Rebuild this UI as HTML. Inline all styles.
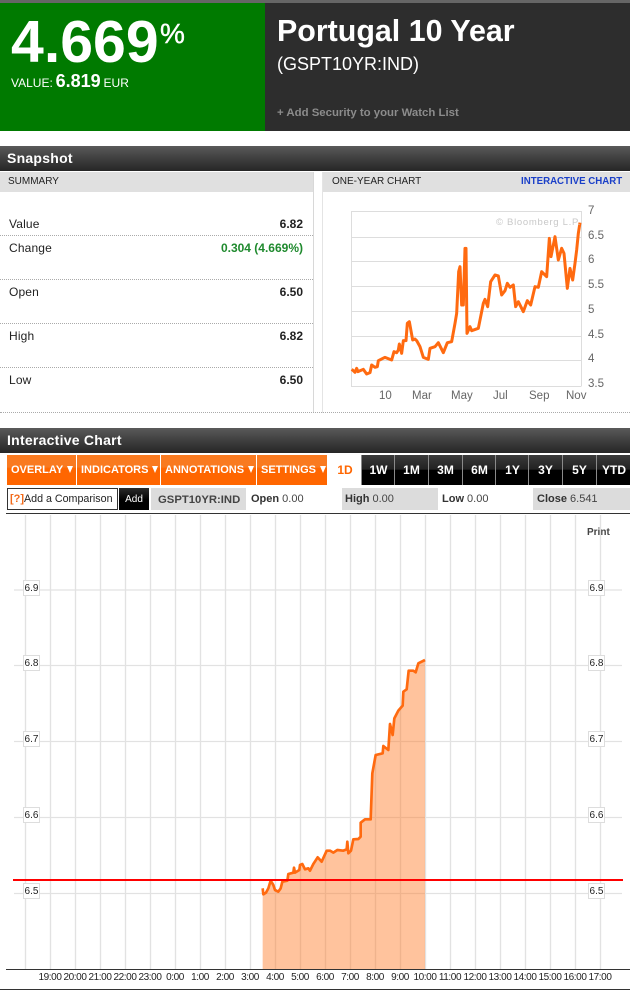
<!DOCTYPE html>
<html><head><meta charset="utf-8"><style>
html,body{margin:0;padding:0;background:#fff}
#p{position:relative;width:630px;height:991px;overflow:hidden;font-family:"Liberation Sans",Arial,sans-serif;background:#fff}
#p div{position:absolute;white-space:nowrap}
.bar{left:0;width:630px;height:25px;background:linear-gradient(#5a5a5a,#444 40%,#262626);color:#fff;font-weight:bold;font-size:14px;line-height:25px;letter-spacing:.25px;text-indent:7px}
.hd{height:20px;top:172px;background:#e0e0e0;font-size:10px;line-height:20px;color:#222}
.dot{left:0;width:313px;border-top:1px dotted #aaa;height:0}
.l{left:9px;font-size:12px;letter-spacing:.15px;color:#222;line-height:14px}
.r{right:327px;font-size:12px;font-weight:bold;color:#222;line-height:14px}
.o{top:455px;height:30px;background:linear-gradient(#f97a20,#f97a20 40%,#ff6600 45%,#ff6600);color:#fff;font-weight:bold;font-size:11px;line-height:30px;text-align:left;padding-left:4px;box-sizing:border-box}
.o i{display:inline-block;width:0;height:0;border-left:3.5px solid transparent;border-right:3.5px solid transparent;border-top:7px solid #fff;margin-left:4px;position:relative;top:0}
.k{top:455px;height:30px;background:linear-gradient(#3a3a3a,#222 48%,#000 50%,#000);color:#fff;font-weight:bold;font-size:12px;line-height:30px;text-align:center;border-left:1px solid #8a8a8a}
.g{background:#dcdcdc;top:488px;height:22px}
.t{top:493px;font-size:11px;line-height:13px;color:#444}
.t b{color:#333}
.tm{top:971px;width:30px;text-align:center;font-size:10px;line-height:13px;color:#222;letter-spacing:-.4px}
.yb{width:15px;height:14px;background:#fff;border:1px solid #ddd;font-size:10px;line-height:15px;text-align:center;color:#222}
</style></head><body><div id="p">
<div style="left:0;top:0;width:630px;height:3px;background:#666"></div>
<div style="left:0;top:3px;width:265px;height:128px;background:#007a00"></div>
<div style="left:265px;top:3px;width:365px;height:128px;background:#2d2d2d"></div>
<div style="left:11px;top:8px;font-size:59px;line-height:68px;font-weight:bold;color:#fff">4.669</div>
<div style="left:160px;top:17px;font-size:28px;line-height:34px;color:#fff;-webkit-text-stroke:.4px #fff">%</div>
<div style="left:11px;top:71px;font-size:12px;line-height:20px;color:#fff">VALUE: <b style="font-size:18px;margin:0 -.5px">6.819</b> EUR</div>
<div style="left:277px;top:13px;font-size:30.4px;line-height:36px;font-weight:bold;color:#fff">Portugal 10 Year</div>
<div style="left:277px;top:52px;font-size:18px;line-height:24px;color:#fff">(GSPT10YR:IND)</div>
<div style="left:277px;top:106px;font-size:11.4px;line-height:15px;font-weight:bold;color:#8c8c8c">+ Add Security to your Watch List</div>

<div class="bar" style="top:146px">Snapshot</div>
<div class="hd" style="left:0;width:313px;text-indent:8px">SUMMARY</div>
<div class="hd" style="left:323px;width:307px;text-indent:9px">ONE-YEAR CHART</div>
<div style="left:521px;top:172px;font-size:9.7px;line-height:20px;font-weight:bold;color:#1a3fc8">INTERACTIVE CHART</div>
<div style="left:313px;top:172px;width:1px;height:241px;background:#d8d8d8"></div>
<div style="left:322px;top:172px;width:1px;height:241px;background:#e4e4e4"></div>
<div class="dot" style="top:235px"></div><div class="dot" style="top:279px"></div><div class="dot" style="top:323px"></div><div class="dot" style="top:367px"></div>
<div class="dot" style="top:412px;width:630px"></div>
<div class="l" style="top:217px">Value</div><div class="r" style="top:217px">6.82</div>
<div class="l" style="top:241px">Change</div><div class="r" style="top:241px;color:#1f8a2e">0.304 (4.669%)</div>
<div class="l" style="top:285px">Open</div><div class="r" style="top:285px">6.50</div>
<div class="l" style="top:329px">High</div><div class="r" style="top:329px">6.82</div>
<div class="l" style="top:373px">Low</div><div class="r" style="top:373px">6.50</div>

<svg style="position:absolute;left:0;top:0" width="630" height="430">
<path d="M351.5 211.5H581.5V386M351.5 211V386.5H581.5M352 237.5H581M352 261.5H581M352 286.5H581M352 311.5H581M352 336.5H581M352 360.5H581" fill="none" stroke="#ddd" stroke-width="1"/>
<g transform="translate(320 170) scale(.33333)"><path d="M95 598L100 602L105 607L110 595L114 605L118 603L130 598L140 612L150 608L155 585L165 592L172 590L175 572L195 562L215 570L222 545L230 548L235 540L238 522L245 550L250 512L258 512L262 460L268 455L278 510L285 507L290 512L300 530L310 562L325 568L330 535L345 530L355 518L370 548L382 518L395 515L405 460L410 430L416 305L420 290L425 405L430 405L435 235L438 235L441 490L450 470L455 482L475 475L490 400L495 388L503 410L512 335L525 315L535 318L545 375L555 362L562 340L570 352L580 345L587 410L595 395L610 425L622 392L632 405L645 350L655 352L665 305L680 320L688 205L693 260L705 200L715 270L725 235L732 250L742 355L750 295L758 330L765 280L770 240L775 190L780 158" fill="none" stroke="#ff6a10" stroke-width="9" stroke-linejoin="round"/></g>
<text x="496" y="225" font-family="Liberation Sans" font-size="9.5" letter-spacing=".7" fill="#c8c8c8">© Bloomberg L.P.</text>
<g font-family="Liberation Sans" font-size="11.5" fill="#666"><text x="588" y="214">7</text><text x="588" y="239">6.5</text><text x="588" y="263">6</text><text x="588" y="288">5.5</text><text x="588" y="313">5</text><text x="588" y="338">4.5</text><text x="588" y="362">4</text><text x="588" y="387">3.5</text>
<text x="379" y="399">10</text><text x="412" y="399">Mar</text><text x="451" y="399">May</text><text x="493" y="399">Jul</text><text x="529" y="399">Sep</text><text x="566" y="399">Nov</text></g>
</svg>

<div class="bar" style="top:428px">Interactive Chart</div>
<div class="o" style="left:7px;width:69px">OVERLAY<i></i></div>
<div class="o" style="left:77px;width:83px">INDICATORS<i></i></div>
<div class="o" style="left:161px;width:95px">ANNOTATIONS<i></i></div>
<div class="o" style="left:257px;width:70px">SETTINGS<i></i></div>
<div style="left:329px;top:455px;width:32px;height:30px;font-size:12px;font-weight:bold;line-height:30px;text-align:center;color:#ff6600">1D</div>
<div class="k" style="left:361px;width:33px">1W</div><div class="k" style="left:394px;width:33px">1M</div><div class="k" style="left:428px;width:33px">3M</div><div class="k" style="left:462px;width:33px">6M</div><div class="k" style="left:495px;width:33px">1Y</div><div class="k" style="left:528px;width:33px">3Y</div><div class="k" style="left:562px;width:33px">5Y</div><div class="k" style="left:596px;width:34px">YTD</div>

<div style="left:7px;top:488px;width:109px;height:20px;border:1px solid #333;background:#fff"></div>
<div style="left:10px;top:492px;font-size:11px;font-weight:bold;line-height:14px;color:#f26a1a">[?]</div>
<div style="left:24px;top:493px;font-size:10.7px;line-height:13px;color:#222">Add a Comparison</div>
<div style="left:119px;top:488px;width:30px;height:22px;background:linear-gradient(#2b2b2b,#000 55%);color:#fff;font-size:10px;line-height:24px;text-align:center">Add</div>
<div class="g" style="left:151px;width:95px"></div>
<div class="g" style="left:342px;width:96px"></div>
<div class="g" style="left:533px;width:97px"></div>
<div class="t" style="left:158px;top:494px;font-weight:bold;color:#444;font-size:11.3px">GSPT10YR:IND</div>
<div class="t" style="left:251px"><b>Open</b> 0.00</div>
<div class="t" style="left:345px"><b>High</b> 0.00</div>
<div class="t" style="left:442px"><b>Low</b> 0.00</div>
<div class="t" style="left:537px"><b>Close</b> 6.541</div>
<div style="left:6px;top:513px;width:624px;height:1px;background:#333"></div>
<div style="left:587px;top:527px;font-size:10px;line-height:12px;font-weight:bold;color:#444">Print</div>

<svg style="position:absolute;left:0;top:0" width="630" height="991">
<path d="M25.5 515V969M50.5 515V969M75.5 515V969M100.5 515V969M125.5 515V969M150.5 515V969M175.5 515V969M200.5 515V969M225.5 515V969M250.5 515V969M275.5 515V969M300.5 515V969M325.5 515V969M350.5 515V969M375.5 515V969M400.5 515V969M425.5 515V969M450.5 515V969M475.5 515V969M500.5 515V969M525.5 515V969M550.5 515V969M575.5 515V969M600.5 515V969" stroke="#e2e2e2" stroke-width="1.3" fill="none"/>
<path d="M14 590H622M14 665.5H622M14 741.5H622M14 817.5H622M14 893.5H622" stroke="#e2e2e2" stroke-width="1.3" fill="none"/>
<g transform="translate(250 640) scale(.33333)">
<path d="M38 745L40 763L48 758L55 745L62 722L70 735L75 750L85 755L92 745L97 725L112 722L115 702L130 698L132 683L135 698L148 690L150 675L157 672L165 688L175 685L180 692L190 672L203 652L215 665L230 632L240 632L250 638L262 630L280 632L290 628L292 605L295 640L303 632L310 598L325 597L332 590L332 548L345 538L362 538L367 400L377 345L398 340L400 318L415 330L420 252L428 285L433 235L445 212L458 197L460 155L470 148L476 92L490 92L497 97L505 70L525 60V987H38Z" fill="#ff7b26" fill-opacity=".45"/>
<path d="M38 745L40 763L48 758L55 745L62 722L70 735L75 750L85 755L92 745L97 725L112 722L115 702L130 698L132 683L135 698L148 690L150 675L157 672L165 688L175 685L180 692L190 672L203 652L215 665L230 632L240 632L250 638L262 630L280 632L290 628L292 605L295 640L303 632L310 598L325 597L332 590L332 548L345 538L362 538L367 400L377 345L398 340L400 318L415 330L420 252L428 285L433 235L445 212L458 197L460 155L470 148L476 92L490 92L497 97L505 70L525 60" fill="none" stroke="#ff6a10" stroke-width="8" stroke-linejoin="round"/>
</g>
<rect x="13" y="879" width="610" height="2" fill="#f00"/>
<rect x="6" y="969" width="624" height="1" fill="#333"/>
<rect x="0" y="989" width="630" height="1" fill="#333"/>
</svg>

<div class="yb" style="left:23px;top:580px">6.9</div><div class="yb" style="left:23px;top:655px">6.8</div><div class="yb" style="left:23px;top:731px">6.7</div><div class="yb" style="left:23px;top:807px">6.6</div><div class="yb" style="left:23px;top:883px">6.5</div>
<div class="yb" style="left:588px;top:580px">6.9</div><div class="yb" style="left:588px;top:655px">6.8</div><div class="yb" style="left:588px;top:731px">6.7</div><div class="yb" style="left:588px;top:807px">6.6</div><div class="yb" style="left:588px;top:883px">6.5</div>

<div class="tm" style="left:35px">19:00</div><div class="tm" style="left:60px">20:00</div><div class="tm" style="left:85px">21:00</div><div class="tm" style="left:110px">22:00</div><div class="tm" style="left:135px">23:00</div><div class="tm" style="left:160px">0:00</div><div class="tm" style="left:185px">1:00</div><div class="tm" style="left:210px">2:00</div><div class="tm" style="left:235px">3:00</div><div class="tm" style="left:260px">4:00</div><div class="tm" style="left:285px">5:00</div><div class="tm" style="left:310px">6:00</div><div class="tm" style="left:335px">7:00</div><div class="tm" style="left:360px">8:00</div><div class="tm" style="left:385px">9:00</div><div class="tm" style="left:410px">10:00</div><div class="tm" style="left:435px">11:00</div><div class="tm" style="left:460px">12:00</div><div class="tm" style="left:485px">13:00</div><div class="tm" style="left:510px">14:00</div><div class="tm" style="left:535px">15:00</div><div class="tm" style="left:560px">16:00</div><div class="tm" style="left:585px">17:00</div>
</div></body></html>
